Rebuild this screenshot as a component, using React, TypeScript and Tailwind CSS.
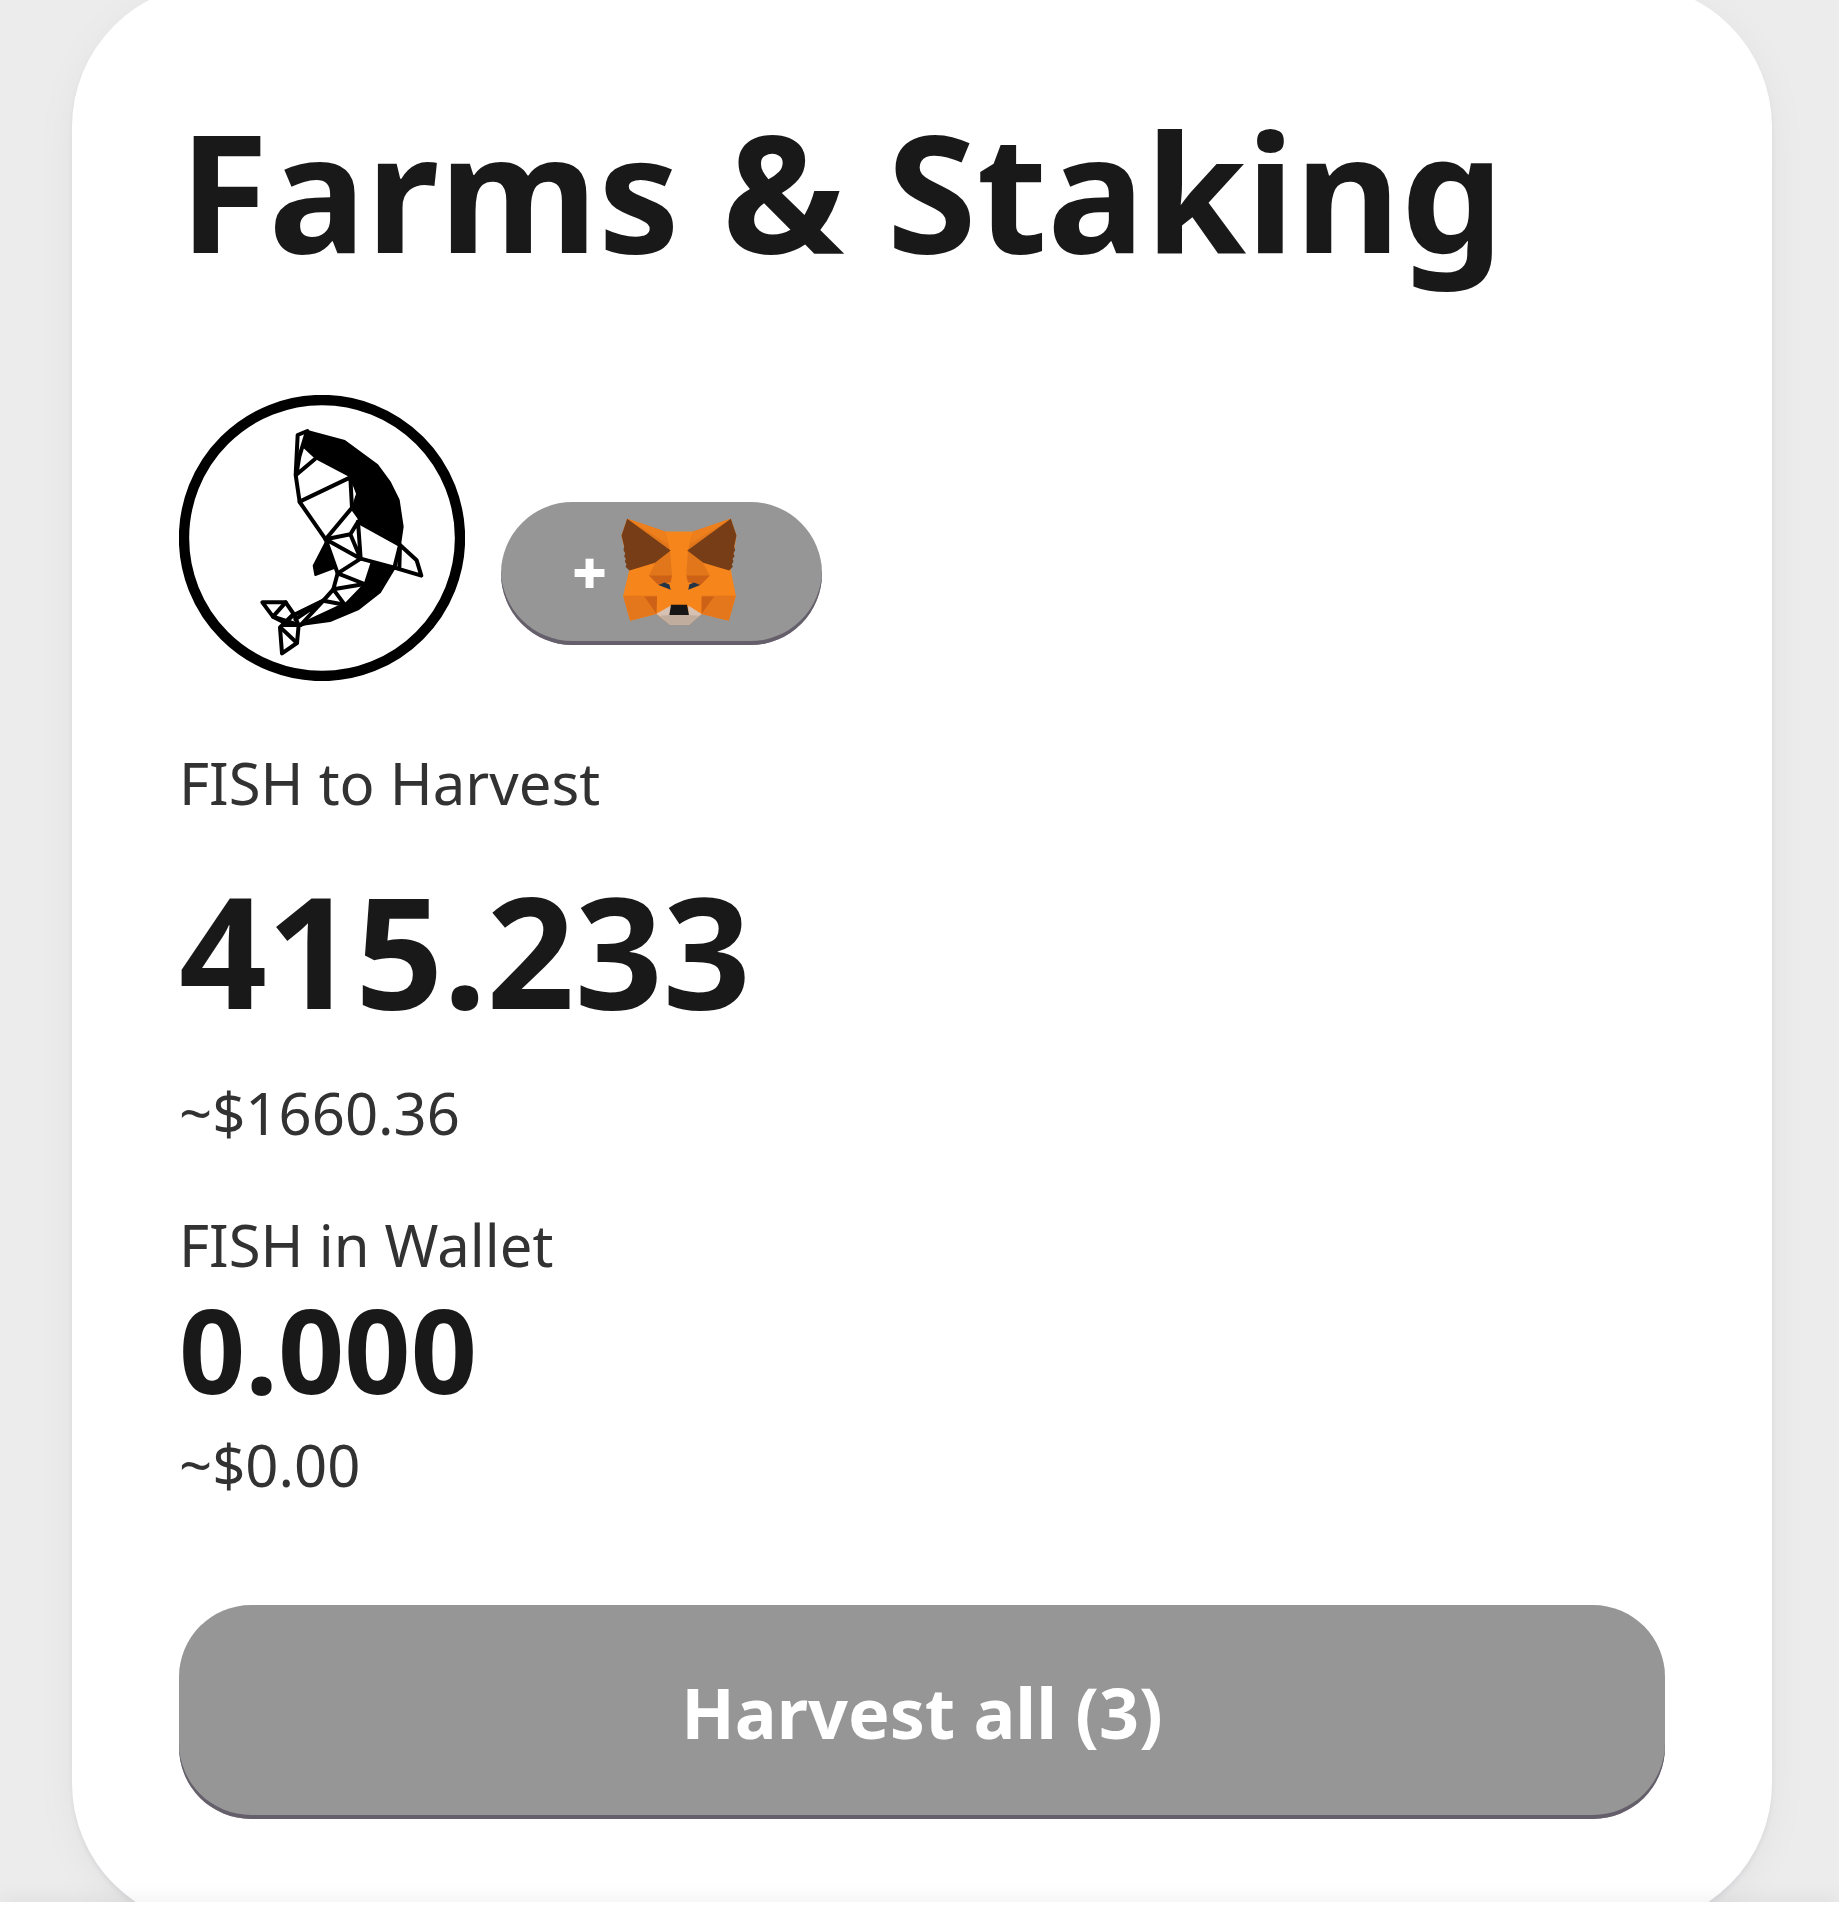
import type { ReactNode } from "react";

function OrcaLogo() {
  return (
    <svg
      viewBox="27 30 858 858"
      className="size-[286px] shrink-0"
      role="img"
      aria-label="FISH"
    >
      <circle cx="456" cy="459" r="414" fill="#fff" stroke="#000" strokeWidth="31" />

      {/* back, lower back, belly fin */}
      <g fill="#000" stroke="#000" strokeWidth="6" strokeLinejoin="round">
        <path d="M412 138L524 168L622 240L660 292L686 345L698 425L690 480L574 413L548 370L560 328L541 274L437 219L404 188Z" />
        <path d="M604 535L672 552L630 622L566 672L480 708L392 720L460 697L524 659L584 597Z" />
        <path d="M467 472L431 542L436 570L496 548Z" />
      </g>
      <path d="M549 303L558 326L549 348Z" fill="#fff" />

      <g fill="none" stroke="#000" strokeWidth="12" strokeLinejoin="round" strokeLinecap="round">
        {/* head */}
        <path d="M412 138L383 150L377 270L389 351L467 463" />
        <path d="M410 142L388 215L379 269L435 222" />
        <path d="M389 350L541 277L546 368L467 463" />
        {/* body */}
        <path d="M467 463L541 448L572 521L467 463L503 565L572 521L564 410L541 448" />
        <path d="M546 368L574 406L564 410" />
        <path d="M572 415L690 480L673 548L572 521" />
        {/* side fin */}
        <path d="M690 480L740 526L754 572L673 548M690 480L688 549" />
        {/* tail */}
        <path d="M503 565L584 597L490 613L503 565" />
        <path d="M490 613L524 659L460 647L490 613" />
        <path d="M460 647L368 692L340 720L392 720L524 659" />
        <path d="M460 647L392 720M455 650L376 703" />
        <path d="M277 652L347 652L371 687L386 720L381 774L336 805L330 727L344 713L309 695Z" />
        <path d="M347 652L309 695L386 720M371 687L344 713M332 728L381 774" />
      </g>
    </svg>
  );
}

function MetaMaskFox() {
  return (
    <svg
      viewBox="390 84 348 322"
      className="h-[107px] w-[116px] shrink-0"
      role="img"
      aria-label="MetaMask"
    >
      <path
        d="M408 86L522 125H607L720 86L737 137L720 241L735 318L714 393L632 373L594 405H537L496 373L417 393L396 318L414 241L391 137Z"
        fill="#f6851b"
      />
      {/* brow and ear edges */}
      <g fill="#e2761b">
        <path d="M408 86L522 125L537 180Z" />
        <path d="M720 86L607 125L591 180Z" />
        <path d="M537 180L543 258H473L492 220Z" />
        <path d="M591 180L586 258H657L637 220Z" />
      </g>
      <path d="M408 86L522 125L530 162Z" fill="#ee7f1d" />
      <path d="M720 86L607 125L599 162Z" fill="#ee7f1d" />
      {/* ears */}
      <g fill="#763d16">
        <path d="M408 86L539 182L492 219L415 242L403 231L406 224L401 214L404 207L399 200L402 190L397 181L399 170L391 137Z" />
        <path d="M720 86L589 182L637 219L715 242L726 231L723 224L728 214L725 207L731 200L728 190L733 181L730 170L737 137Z" />
      </g>
      {/* cheeks */}
      <g fill="#e4761b">
        <path d="M396 318H498L496 372L417 393Z" />
        <path d="M735 318H632V373L714 393Z" />
      </g>
      <g fill="#cd6116">
        <path d="M460 320H498L496 372Z" />
        <path d="M670 320H632V372Z" />
        <path d="M473 257H543L539 277L502 286Z" />
        <path d="M657 257H586L591 277L629 286Z" />
      </g>
      <path d="M502 286L539 298L543 345L498 320Z" fill="#f6851b" />
      <path d="M629 286L591 298L586 345L632 320Z" fill="#f6851b" />
      <path d="M502 286L520 278L535 284L539 300Z" fill="#233447" />
      <path d="M628 286L609 278L595 284L592 300Z" fill="#233447" />
      {/* muzzle */}
      <path d="M496 372L540 347V378L592 376V347L632 373L594 405H537Z" fill="#d7c1b3" />
      <path d="M506 378L536 376H594L624 378L594 405H537Z" fill="#c0ad9e" />
      <path d="M540 345H588L594 376H535Z" fill="#161616" />
    </svg>
  );
}

function Label({ children }: { children: ReactNode }) {
  return <p className="text-[58px] leading-[72px] text-[#323232]">{children}</p>;
}

export default function App() {
  return (
    <div className="overflow-hidden bg-[#ececec] font-['Noto_Sans',sans-serif] text-[#191919]">

      <main className="-mt-4 -mb-6 mr-[67px] ml-[72px] rounded-[143px] bg-white p-[107px] shadow-[0_9px_54px_-18px_rgba(25,19,38,0.1),0_4px_5px_rgba(25,19,38,0.05)]">

        <h1 className="text-[163px] leading-[198px] font-bold">
          Farms &amp; Staking
        </h1>

        <div className="mt-[106px] flex items-end gap-9">
          <OrcaLogo />

          <button
            type="button"
            aria-label="Add FISH to MetaMask"
            className="mb-9 flex h-[143px] items-center gap-[14px] rounded-[72px] bg-[#969696] pr-[85px] pb-1 pl-[71px] font-['Open_Sans',sans-serif] text-[60px] font-extrabold text-white shadow-[inset_0_-4px_0_#655f6b]"
          >
            <span>+</span>
            <MetaMaskFox />
          </button>
        </div>

        <section className="mt-[66px]">
          <Label>FISH to Harvest</Label>
          <p className="mt-[50px] mb-12 text-[154px] leading-[160px] font-bold">415.233</p>
          <Label>~$1660.36</Label>
        </section>

        <section className="mt-[60px]">
          <Label>FISH in Wallet</Label>
          <p className="mt-2 mb-5 text-[116px] leading-[120px] font-bold">0.000</p>
          <Label>~$0.00</Label>
        </section>

        <button
          type="button"
          className="mt-[104px] h-[214px] w-full rounded-[72px] bg-[#969696] text-[70px] font-bold text-white shadow-[inset_0_-4px_0_#655f6b]"
        >
          Harvest all (3)
        </button>

      </main>

      {/* bottom navigation edge */}
      <footer className="relative h-[18px] bg-white shadow-[0_-4px_20px_rgba(0,0,0,0.06)]" />

    </div>
  );
}
